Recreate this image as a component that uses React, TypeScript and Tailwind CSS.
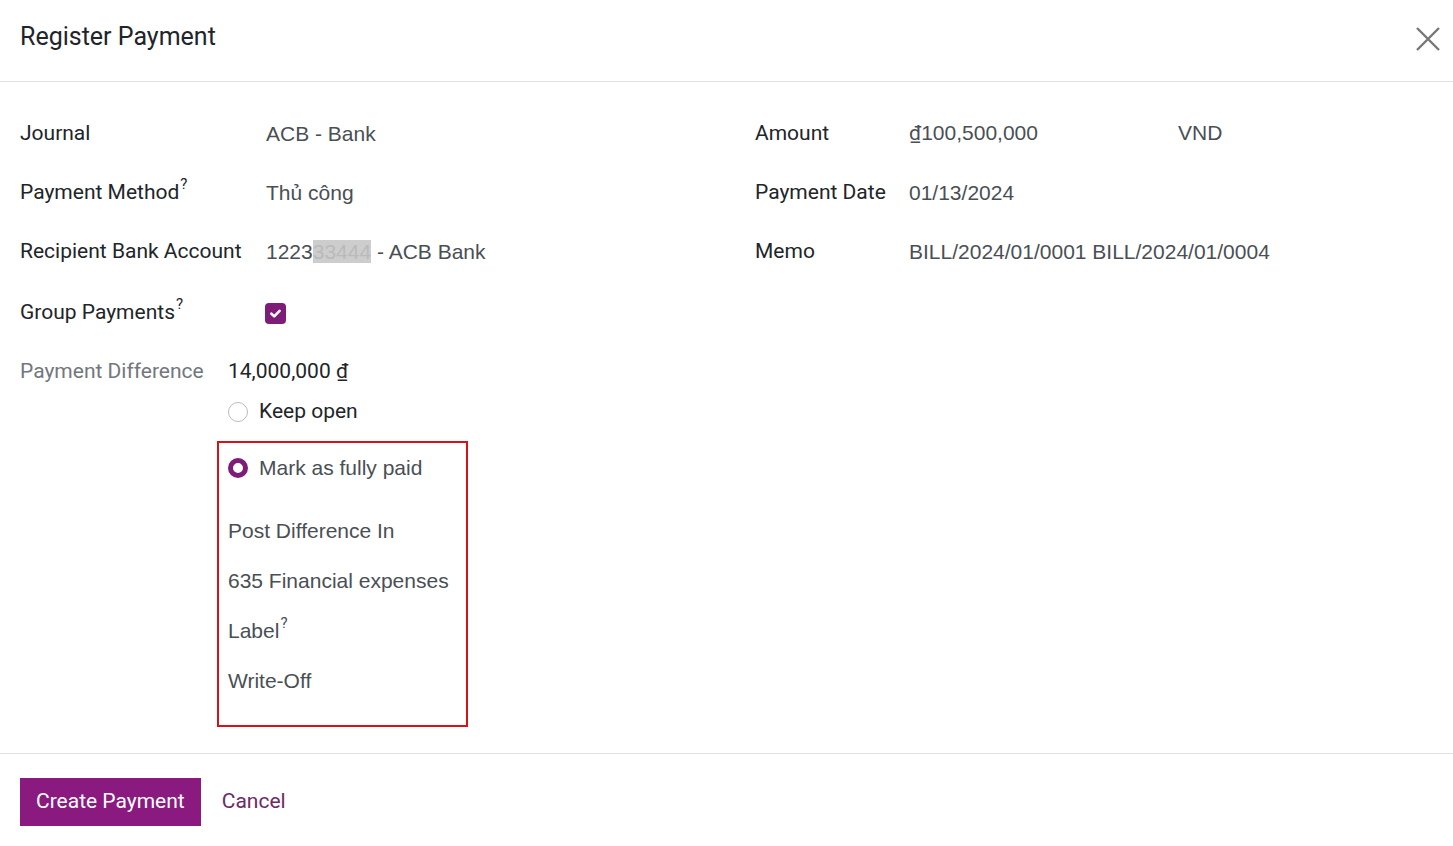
import React from "react";

const roboto = { fontFamily: "Roboto, 'Noto Sans', sans-serif" } as React.CSSProperties;
const arial = { fontFamily: "'Liberation Sans', Arial, sans-serif" } as React.CSSProperties;

function Label({ text, help, w }: { text: string; help?: boolean; w: string }) {
  return (
    <div className={`${w} shrink-0 text-[21px] text-[#212529] flex items-center h-full`} style={roboto}>
      <span>{text}</span>
      {help && <span className="text-[15px] relative -top-[8px] ml-[1px]">?</span>}
    </div>
  );
}

function Row({ label, children, help }: { label: string; children: React.ReactNode; help?: boolean }) {
  return (
    <div className="flex items-center h-[59px]">
      <Label text={label} help={help} w="w-[246px]" />
      <div className="text-[21px] text-[#4a4f55]" style={arial}>
        {children}
      </div>
    </div>
  );
}

function RRow({ label, children }: { label: string; children: React.ReactNode }) {
  return (
    <div className="flex items-center h-[59px]">
      <Label text={label} w="w-[154px]" />
      <div className="text-[21px] text-[#4a4f55] flex" style={arial}>
        {children}
      </div>
    </div>
  );
}

export default function App() {
  return (
    <div className="w-[1453px] h-[846px] bg-white flex flex-col" style={roboto}>
      <div className="h-[82px] border-b border-[#dee2e6] flex items-center justify-between pl-[20px] pr-[12px] shrink-0">
        <div className="text-[25px] text-[#212529] -mt-[7px]">Register Payment</div>
        <svg width="26" height="26" viewBox="0 0 26 26" className="-mt-[4px]">
          <path d="M2 2 L24 24 M24 2 L2 24" stroke="#777" strokeWidth="2.4" />
        </svg>
      </div>

      <div className="flex-1 px-[20px] pt-[22px]">
        <div className="flex">
          <div className="w-[735px] shrink-0">
            <Row label="Journal">ACB - Bank</Row>
            <Row label="Payment Method" help>
              Thủ công
            </Row>
            <Row label="Recipient Bank Account">
              <span>1223</span>
              <span className="bg-[#cdcdcd] text-[#bababa]">33444</span>
              <span> - ACB Bank</span>
            </Row>
            <div className="flex items-center h-[59px] pt-[4px]">
              <Label text="Group Payments" help w="w-[245px]" />
              <div className="w-[21px] h-[21px] rounded-[4px] bg-[#7e1d78] flex items-center justify-center mt-[2px]">
                <svg width="13" height="13" viewBox="0 0 12 12">
                  <path d="M2.2 6.2 L4.8 8.7 L9.8 3.6" stroke="white" strokeWidth="2.4" fill="none" strokeLinecap="round" strokeLinejoin="round" />
                </svg>
              </div>
            </div>
          </div>
          <div className="flex-1">
            <RRow label="Amount">
              <span className="w-[269px]">
                <span style={roboto}>₫</span>100,500,000
              </span>
              <span>VND</span>
            </RRow>
            <RRow label="Payment Date">01/13/2024</RRow>
            <RRow label="Memo">BILL/2024/01/0001 BILL/2024/01/0004</RRow>
          </div>
        </div>

        <div className="flex items-center h-[40px] mt-[12px]">
          <div className="w-[208px] shrink-0 text-[21px] text-[#72777d]">Payment Difference</div>
          <div className="text-[21px] text-[#212529]">14,000,000 ₫</div>
        </div>
        <div className="flex items-center h-[40px] pl-[208px]">
          <div className="w-[20px] h-[20px] rounded-full border border-[#b8bcc0] bg-white mr-[11px]" />
          <div className="text-[21px] text-[#212529]">Keep open</div>
        </div>

        <div className="ml-[197px] mt-[9px] w-[251px] h-[286px] border-2 border-[#d8101a] pl-[9px]">
          <div className="flex items-center h-[50px]">
            <div className="w-[20px] h-[20px] rounded-full border-[5px] border-[#7e1d78] bg-white mr-[11px]" />
            <div className="text-[21px] text-[#4a4f55]" style={arial}>
              Mark as fully paid
            </div>
          </div>
          <div className="mt-[12px] text-[21px] text-[#4a4f55]" style={arial}>
            <div className="h-[51px] flex items-center">Post Difference In</div>
            <div className="h-[50px] flex items-center">635 Financial expenses</div>
            <div className="h-[50px] flex items-center">
              <span>Label</span>
              <span className="text-[15px] relative -top-[8px] ml-[1px]" style={roboto}>?</span>
            </div>
            <div className="h-[50px] flex items-center">Write-Off</div>
          </div>
        </div>
      </div>

      <div className="h-[93px] shrink-0 border-t border-[#dee2e6] px-[20px] pt-[24px] flex items-start gap-[21px]">
        <button className="h-[48px] px-[16px] bg-[#8a1a80] text-white text-[21px]" style={roboto}>
          Create Payment
        </button>
        <button className="h-[48px] text-[21px] text-[#6e2a67]" style={roboto}>
          Cancel
        </button>
      </div>
    </div>
  );
}
